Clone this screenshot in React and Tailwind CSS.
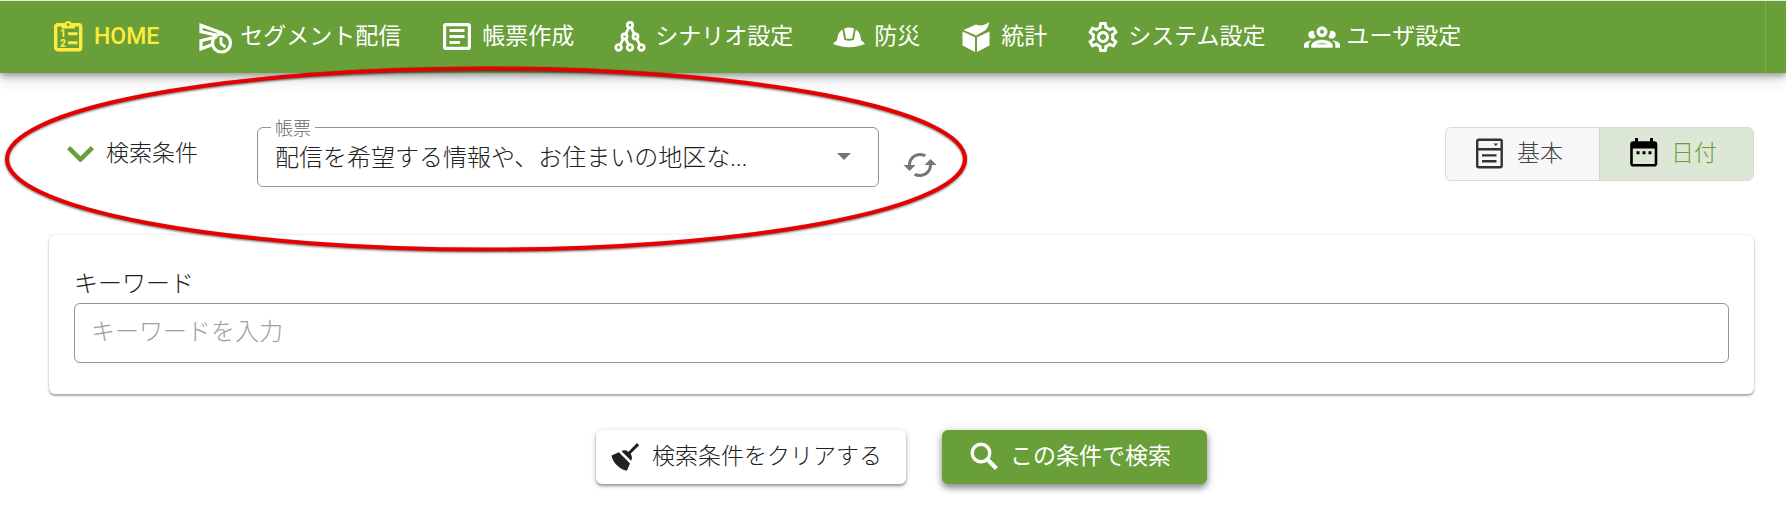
import React from "react";
import { MdCached, MdOutlineSettings } from "react-icons/md";

function ClipboardIcon() {
  return (
    <svg viewBox="0 0 36 36" className="size-9" fill="none" stroke="currentColor" aria-hidden="true">
      <rect x="4.7" y="5.7" width="25" height="25" rx="2" strokeWidth="3.400" />
      <path d="M10.500 5h3a3.800 3.800 0 0 1 7.400 0h3V9.500H10.500z" fill="currentColor" stroke="none" />
      <circle cx="17.200" cy="5.700" r="1.400" fill="#689f38" stroke="none" />
      <path d="M17 14.700h9.500M17 23.700h9.500" strokeWidth="3" />
      <g fill="currentColor" stroke="none" fontSize="10" fontWeight="900" fontFamily="Roboto, sans-serif">
        <text x="9" y="18">1</text>
        <text x="9" y="27.500">2</text>
      </g>
    </svg>
  );
}

function SendClockIcon() {
  return (
    <svg viewBox="0 0 36 36" className="size-9" fill="none" stroke="currentColor" strokeWidth="3.200" aria-hidden="true">
      <path d="M26.500 14.600L4 6.400v6.200L20 16.200M20 17.700L4 21.700v8.300l11.500-4.600" />
      <circle cx="24.500" cy="24" r="9" strokeWidth="3.200" />
      <path d="M24 18.200v6.300l4.300 3.600" strokeWidth="2.800" />
    </svg>
  );
}

function ListIcon() {
  return (
    <svg viewBox="0 0 36 36" className="size-9" fill="none" stroke="currentColor" strokeWidth="3.200" aria-hidden="true">
      <rect x="5.600" y="5.600" width="24.800" height="23.800" rx="1.500" />
      <path d="M10.500 11.500h15M10.500 17.500h15M10.500 23.500h10.500" strokeWidth="2.800" />
    </svg>
  );
}

function TreeIcon() {
  return (
    <svg viewBox="0 0 36 36" className="size-9" fill="none" stroke="currentColor" strokeWidth="2.800" aria-hidden="true">
      <circle cx="18" cy="6" r="2.700" />
      <circle cx="12.500" cy="17.500" r="2.500" />
      <circle cx="23.500" cy="17.500" r="2.500" />
      <circle cx="6.600" cy="28.500" r="2.800" />
      <circle cx="18" cy="28.500" r="2.800" />
      <circle cx="29.400" cy="28.500" r="2.800" />
      <path d="M16.800 8.500l-3.200 6.600M19.200 8.500l3.200 6.600M11.300 19.800l-3.300 6.300M13.700 19.800l3 6.300M24.700 19.800l3.300 6.300" />
    </svg>
  );
}

function HelmetIcon() {
  return (
    <svg viewBox="0 0 36 36" className="size-9" fill="currentColor" aria-hidden="true">
      <path d="M13.200 9.400q4.900-1.600 9.800 0l-1.800 10q-3.100.8-6.200 0z" />
      <path d="M11.400 10.600l1.900 10.200q4.800 1.700 9.600 0l1.900-10.200q4.800 2.900 5.400 10.900 2.600 1 3.800 3.600Q27 28.200 18.100 28.200T2.200 25.100q1.200-2.600 3.800-3.600.6-8 5.400-10.900z" />
    </svg>
  );
}

function CubeIcon() {
  return (
    <svg viewBox="0 0 36 36" className="size-9" fill="currentColor" aria-hidden="true">
      <path d="M5.500 11L18 5.600q4.500 1.500 7.500.5 3.500-1 5.500-3.100-.3 5-3.600 8.200L18.200 16.600z" />
      <path d="M4.500 12.500L17 18.300V33L4.500 26.600zM31.500 12.500L19 18.300V33l12.500-6.400z" />
    </svg>
  );
}

function UsersIcon() {
  return (
    <svg viewBox="0 0 24 24" className="size-9" fill="currentColor" aria-hidden="true">
      <path d="M12,5A3.500,3.500 0 0,0 8.500,8.500A3.500,3.500 0 0,0 12,12A3.500,3.500 0 0,0 15.500,8.500A3.500,3.500 0 0,0 12,5M12,7A1.500,1.500 0 0,1 13.500,8.500A1.500,1.500 0 0,1 12,10A1.500,1.500 0 0,1 10.500,8.500A1.500,1.500 0 0,1 12,7M5.500,8A2.500,2.500 0 0,0 3,10.500C3,11.440 3.530,12.250 4.290,12.680C4.650,12.880 5.060,13 5.500,13C5.940,13 6.350,12.880 6.710,12.680C7.080,12.470 7.390,12.170 7.620,11.810C6.890,10.860 6.500,9.700 6.500,8.500C6.500,8.410 6.500,8.310 6.500,8.220C6.200,8.080 5.860,8 5.500,8M18.500,8C18.140,8 17.800,8.080 17.500,8.220C17.500,8.310 17.500,8.410 17.500,8.500C17.500,9.700 17.110,10.860 16.380,11.810C16.500,12 16.630,12.150 16.780,12.300C16.940,12.450 17.100,12.580 17.290,12.680C17.650,12.880 18.060,13 18.500,13C18.940,13 19.350,12.880 19.710,12.680C20.470,12.250 21,11.440 21,10.500A2.500,2.500 0 0,0 18.500,8M12,14C9.660,14 5,15.170 5,17.500V19H19V17.500C19,15.170 14.340,14 12,14M4.710,14.550C2.780,14.780 0,15.760 0,17.500V19H3V17.070C3,16.060 3.690,15.220 4.710,14.550M19.290,14.550C20.310,15.220 21,16.060 21,17.070V19H24V17.500C24,15.760 21.220,14.780 19.290,14.550M12,16C13.530,16 15.240,16.500 16.230,17H7.770C8.760,16.500 10.470,16 12,16Z" stroke="currentColor" strokeWidth="0.3" />
    </svg>
  );
}

function FormIcon() {
  return (
    <svg viewBox="0 0 36 36" className="size-9" fill="none" stroke="#333" strokeWidth="2.400" aria-hidden="true">
      <rect x="6.200" y="3.700" width="24.500" height="27.500" rx="1.500" />
      <path d="M6 13.200h24.500M11 19.400h14.500M11 25.200h14.500" />
      <path d="M22.500 7.400h4.600l-2.300 2.600z" fill="#333" stroke="none" />
    </svg>
  );
}

function CalendarIcon() {
  return (
    <svg viewBox="0 0 36 36" className="size-9" fill="none" stroke="#000" aria-hidden="true">
      <rect x="6.500" y="6.500" width="24.500" height="22.800" rx="1.800" strokeWidth="2.600" />
      <path d="M6.500 6h24.500v6.500H6.500z" fill="#000" stroke="none" />
      <path d="M11.500 2v5M26.500 2v5" strokeWidth="3" />
      <path d="M11.500 16.700h3M17.500 16.700h3M23.500 16.700h3" strokeWidth="3" />
    </svg>
  );
}

function BroomIcon() {
  return (
    <svg viewBox="0 0 24 24" className="size-9" fill="currentColor" aria-hidden="true">
      <path d="M19.360,2.720L20.780,4.140L15.060,9.850C16.130,11.390 16.280,13.240 15.380,14.440L9.060,8.120C10.260,7.220 12.110,7.370 13.650,8.440L19.360,2.720M5.930,17.570C3.920,15.560 2.690,13.160 2.350,10.920L7.230,8.830L14.670,16.270L12.580,21.150C10.340,20.810 7.940,19.580 5.930,17.570Z" />
    </svg>
  );
}

function SearchIcon() {
  return (
    <svg viewBox="0 0 36 36" className="size-9" fill="none" stroke="currentColor" strokeWidth="3.400" aria-hidden="true">
      <circle cx="15" cy="14" r="8.800" />
      <path d="M21 20l9.400 9.400" strokeWidth="4.200" />
    </svg>
  );
}

const navItems = [
  { label: "HOME", icon: <ClipboardIcon />, active: true },
  { label: "セグメント配信", icon: <SendClockIcon /> },
  { label: "帳票作成", icon: <ListIcon /> },
  { label: "シナリオ設定", icon: <TreeIcon /> },
  { label: "防災", icon: <HelmetIcon /> },
  { label: "統計", icon: <CubeIcon /> },
  { label: "システム設定", icon: <MdOutlineSettings className="size-9" /> },
  { label: "ユーザ設定", icon: <UsersIcon /> },
];

function NavBar() {
  return (
    <header className="flex h-[73px] border-t border-gray-200 bg-[#689f38] text-white shadow-[0_3px_6px_rgba(0,0,0,0.3),0_6px_15px_rgba(0,0,0,0.15)]">
      <nav className="flex flex-1 items-center gap-[38px] border-r border-[#7cb342] pl-[51px]">
        {navItems.map((item) => (
          <a
            key={item.label}
            href="#"
            aria-current={item.active ? "page" : undefined}
            className={
              item.active
                ? "flex shrink-0 items-center gap-[7px] font-medium text-[#ffeb3b]"
                : "flex shrink-0 items-center gap-[7px] font-normal"
            }
          >
            {item.icon}
            {item.label}
          </a>
        ))}
      </nav>
      <div className="w-5" />
    </header>
  );
}

function FormSelect() {
  return (
    <div className="relative ml-[59px] w-[622px]">
      <label htmlFor="form-select" className="absolute -top-2.5 left-3.5 bg-white px-1 text-[18px] leading-6 text-[#666]">
        帳票
      </label>
      <select
        id="form-select"
        className="h-[60px] w-full appearance-none rounded-md border border-[#949494] bg-white pt-0.5 pr-16 pl-[17px] text-[24px] text-[#212121]"
      >
        <option>配信を希望する情報や、お住まいの地区な...</option>
      </select>
      <svg viewBox="0 0 14 7" className="pointer-events-none absolute top-[26px] right-7 w-3.5" fill="#757575" aria-hidden="true">
        <path d="M0 0h14L7 7z" />
      </svg>
    </div>
  );
}

export default function App() {
  return (
    <div className="relative bg-white font-['Roboto','Noto_Sans_CJK_JP',sans-serif] text-[23px] leading-9 font-light text-[#212121]">
      <NavBar />
      <main className="pt-[54px] pr-8 pb-8 pl-[49px]">
        <div className="mb-12 flex items-start">
          <button type="button" className="ml-[18px] flex h-[54px] items-center gap-3">
            <svg viewBox="6 8.580 12 7.420" className="w-[27px]" fill="#689f38" aria-hidden="true">
              <path d="M7.410,8.580L12,13.170L16.590,8.580L18,10L12,16L6,10L7.410,8.580Z" />
            </svg>
            検索条件
          </button>
          <FormSelect />
          <button type="button" aria-label="更新" className="mt-5 ml-[23px] text-[#757575]">
            <MdCached className="size-9" />
          </button>
          <div className="ml-auto flex h-[54px] overflow-hidden rounded-md border border-[#d9d9d9] bg-[#f7f7f7]">
            <button type="button" aria-pressed="false" className="flex w-[153px] items-center gap-2.5 pl-[25px] text-[#444]">
              <FormIcon />
              基本
            </button>
            <button
              type="button"
              aria-pressed="true"
              className="flex w-[154px] items-center gap-2.5 border-l border-[#d0d8cc] bg-[#dce7d5] pl-[25px] text-[#689f38]"
            >
              <CalendarIcon />
              日付
            </button>
          </div>
        </div>

        <section className="rounded-md bg-white px-[25px] py-[31px] text-[24px] shadow-[0_2px_2px_rgba(0,0,0,0.3),0_0_3px_rgba(0,0,0,0.15)]">
          <label htmlFor="keyword" className="block leading-[37px]">
            キーワード
          </label>
          <input
            id="keyword"
            type="text"
            placeholder="キーワードを入力"
            className="block h-[60px] w-full rounded-md border border-[#949494] px-4 pb-0.5 placeholder:text-[#9e9e9e]"
          />
        </section>

        <div className="mt-9 flex justify-center gap-9">
          <button
            type="button"
            className="flex h-[54px] items-center gap-2 rounded-md pr-6 pl-3 shadow-[0_2px_3px_rgba(0,0,0,0.35),0_1px_6px_rgba(0,0,0,0.15)]"
          >
            <BroomIcon />
            検索条件をクリアする
          </button>
          <button
            type="button"
            className="flex h-[54px] items-center gap-2 rounded-md bg-[#689f38] pr-9 pl-6 font-normal text-white shadow-[0_4px_6px_rgba(0,0,0,0.4),0_1px_12px_rgba(0,0,0,0.15)]"
          >
            <SearchIcon />
            この条件で検索
          </button>
        </div>
      </main>

      <svg
        viewBox="0 0 972 200"
        className="pointer-events-none absolute top-[60px] left-0 w-[972px] drop-shadow-[0_1px_1px_rgba(0,0,0,0.6)]"
        fill="none"
        stroke="#e60000"
        strokeWidth="4"
        aria-hidden="true"
      >
        <ellipse cx="486" cy="99" rx="479" ry="90.500" />
      </svg>
    </div>
  );
}
